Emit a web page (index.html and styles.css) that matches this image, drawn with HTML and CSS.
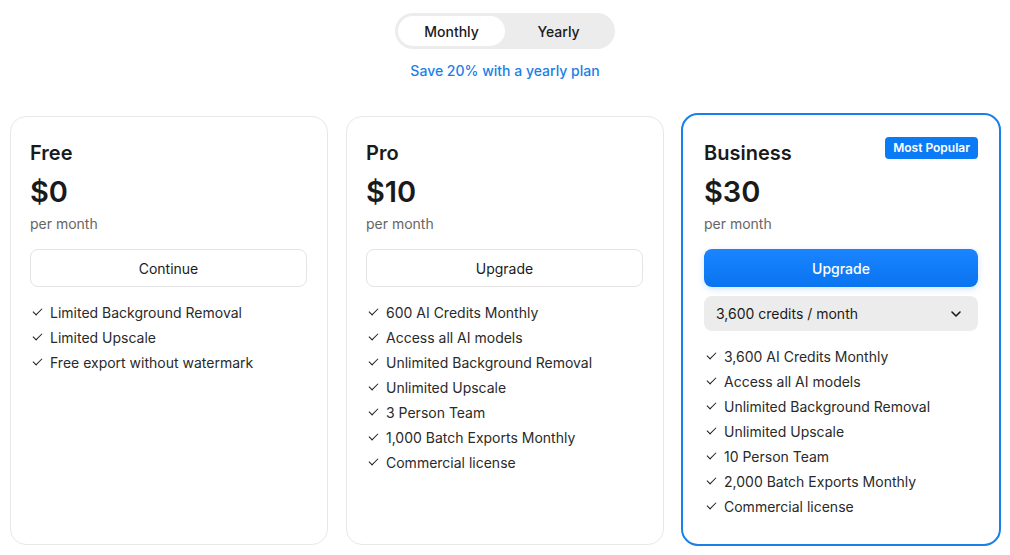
FILE: index.html
```html
<!DOCTYPE html>
<html lang="en">
<head>
  <meta charset="UTF-8">
  <meta name="viewport" content="width=device-width, initial-scale=1.0">
  <title>Pricing</title>
  <link rel="stylesheet" href="styles.css">
</head>
<body>
  <!-- billing toggle -->
  <div class="billing">
    <div class="toggle">
      <button class="toggle-opt active">Monthly</button>
      <button class="toggle-opt">Yearly</button>
    </div>
    <p class="save-note">Save 20% with a yearly plan</p>
  </div>

  <!-- plans -->
  <div class="plans">
    <div class="plan">
      <div class="plan-head">
        <h2>Free</h2>
      </div>
      <div class="price">$0</div>
      <div class="period">per month</div>
      <button class="btn">Continue</button>
      <ul class="features">
        <li>Limited Background Removal</li>
        <li>Limited Upscale</li>
        <li>Free export without watermark</li>
      </ul>
    </div>

    <div class="plan">
      <div class="plan-head">
        <h2>Pro</h2>
      </div>
      <div class="price">$10</div>
      <div class="period">per month</div>
      <button class="btn">Upgrade</button>
      <ul class="features">
        <li>600 AI Credits Monthly</li>
        <li>Access all AI models</li>
        <li>Unlimited Background Removal</li>
        <li>Unlimited Upscale</li>
        <li>3 Person Team</li>
        <li>1,000 Batch Exports Monthly</li>
        <li>Commercial license</li>
      </ul>
    </div>

    <div class="plan plan-popular">
      <div class="plan-head">
        <h2>Business</h2>
        <span class="badge">Most Popular</span>
      </div>
      <div class="price">$30</div>
      <div class="period">per month</div>
      <button class="btn btn-primary">Upgrade</button>
      <div class="credits">
        <span>3,600 credits / month</span>
        <svg width="16" height="16" viewBox="0 0 24 24" fill="none" stroke="#1a1a1a" stroke-width="2.4" stroke-linecap="round" stroke-linejoin="round"><path d="M6 9l6 6 6-6"/></svg>
      </div>
      <ul class="features">
        <li>3,600 AI Credits Monthly</li>
        <li>Access all AI models</li>
        <li>Unlimited Background Removal</li>
        <li>Unlimited Upscale</li>
        <li>10 Person Team</li>
        <li>2,000 Batch Exports Monthly</li>
        <li>Commercial license</li>
      </ul>
    </div>
  </div>
</body>
</html>
```

FILE: styles.css
```css
/* base */
* { box-sizing: border-box; }
body { margin: 0; padding: 13px 10px 0; font-family: Inter, "Noto Sans", sans-serif; color: #1a1a1a; background: #fff; }

/* billing toggle */
.billing { display: flex; flex-direction: column; align-items: center; }
.toggle { display: flex; width: 220px; height: 36px; padding: 3px; background: #ececec; border-radius: 18px; }
.toggle-opt { flex: 1; border: none; background: transparent; border-radius: 15px; font-family: inherit; font-size: 14px; font-weight: 500; color: #1a1a1a; cursor: pointer; }
.toggle-opt.active { background: #fff; }
.save-note { margin: 13px 0 0; font-size: 14px; font-weight: 500; color: #1a7fe6; line-height: 18px; }

/* plans */
.plans { display: grid; grid-template-columns: repeat(3, 318px); gap: 18px; margin-top: 36px; }
.plan { border: 1px solid #e8e8e8; border-radius: 16px; padding: 24px 20px 20px 19px; height: 429px; }
.plan-popular { border: 2px solid #1a7fe6; padding: 26px 21px 20px 21px; margin: -3px -1px 0 -1px; height: 433px; border-radius: 17px; }
.plan-head { display: flex; justify-content: space-between; align-items: center; height: 24px; }
.plan-head h2 { margin: 0; font-size: 20px; font-weight: 600; line-height: 24px; }
.badge { background: #0b7bf5; color: #fff; font-size: 12px; font-weight: 600; line-height: 22px; padding: 0 8px; border-radius: 4px; margin-top: -10px; }
.price { margin-top: 10px; font-size: 29px; font-weight: 600; line-height: 34px; }
.period { margin-top: 6px; font-size: 14px; color: #666; line-height: 18px; }

.btn { display: block; width: 100%; height: 38px; margin-top: 16px; border: 1px solid #e4e4e4; border-radius: 8px; background: #fff; font-family: inherit; font-size: 14px; font-weight: 400; color: #1a1a1a; cursor: pointer; }
.btn-primary { border: none; background: linear-gradient(#1a85ff, #0a74f0); color: #fff; font-weight: 500; box-shadow: 0 2px 6px rgba(10,116,240,0.2); }

.credits { display: flex; justify-content: space-between; align-items: center; height: 35px; margin-top: 9px; padding: 0 14px 0 12px; background: #ececec; border-radius: 8px; font-size: 14px; font-weight: 400; }

.features { list-style: none; margin: 13px 0 0; padding: 0; }
.features li { position: relative; padding-left: 20px; font-size: 14px; line-height: 25px; color: #2a2a2a; }
.features li::before { content: ""; position: absolute; left: 3px; top: 8px; width: 8px; height: 4px; border-left: 1.5px solid #1a1a1a; border-bottom: 1.5px solid #1a1a1a; transform: rotate(-45deg); }
.plan-popular .features { margin-top: 13px; }
```
